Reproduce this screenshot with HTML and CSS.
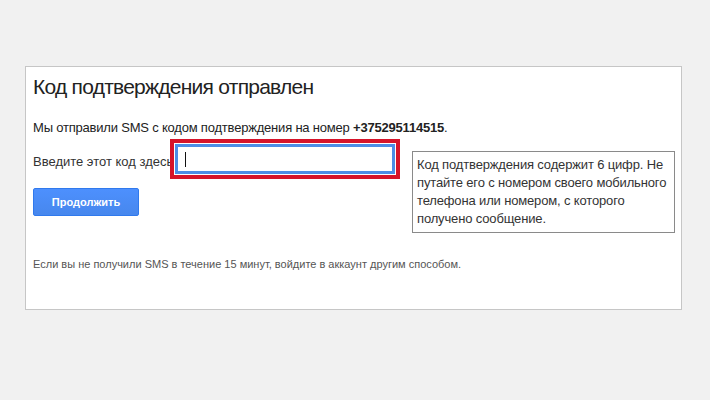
FILE: index.html
```html
<!DOCTYPE html>
<html>
<head>
  <meta content="text/html; charset=UTF-8" http-equiv="content-type" />
  <link rel="stylesheet" href="styles.css">
</head>
<body>
  <div id="card">
    <h1 class="title">Код подтверждения отправлен</h1>
    <p class="sent">Мы отправили SMS с кодом подтверждения на номер <b>+375295114515</b>.</p>
    <div class="codeRow">
      <label class="codeLabel" for="code">Введите этот код здесь</label>
      <div class="highlight">
        <div class="codeInput" id="code"><span class="caret"></span></div>
      </div>
      <div class="hint">Код подтверждения содержит 6 цифр. Не путайте его с номером своего мобильного телефона или номером, с которого получено сообщение.</div>
    </div>
    <button class="btnContinue">Продолжить</button>
    <p class="footnote">Если вы не получили SMS в течение 15 минут, войдите в аккаунт другим способом.</p>
  </div>
</body>
</html>
```

FILE: styles.css
```css
body {
  margin: 0;
  background: #f1f1f1;
  font-family: "Liberation Sans", Arial, sans-serif;
  color: #222;
}
#card {
  margin: 66px 0 0 25px;
  width: 648px;
  height: 242px;
  background: #fff;
  border: 1px solid #c6c6c6;
  padding: 0 0 0 7px;
}
.title {
  margin: 0;
  padding-top: 7px;
  font-size: 21px;
  letter-spacing: -0.75px;
  font-weight: normal;
  line-height: 26px;
  color: #222;
}
.sent {
  margin: 20px 0 0 0;
  font-size: 13px;
  letter-spacing: -0.2px;
  line-height: 16px;
}
.codeRow {
  display: flex;
  align-items: flex-start;
  margin-top: 3px;
  height: 49px;
}
.codeLabel {
  font-size: 13px;
  line-height: 16px;
  margin-top: 15px;
  width: 137px;
  flex: none;
  white-space: nowrap;
  color: #333;
}
.highlight {
  border: 4px solid #d6142a;
  padding: 1px;
  width: 230px;
  height: 40px;
  box-sizing: border-box;
  flex: none;
  background: #fff;
}
.codeInput {
  height: 100%;
  border: 3px solid #4d8ee6;
  box-sizing: border-box;
  background: #fff;
  padding: 5px 0 0 7px;
}
.caret {
  display: block;
  width: 1px;
  height: 15px;
  background: #111;
}
.hint {
  flex: none;
  margin: 12px 0 0 12px;
  width: 253px;
  border: 1px solid #8a8a8a;
  padding: 4px;
  font-size: 13px;
  letter-spacing: -0.15px;
  line-height: 18px;
  color: #333;
  background: #fff;
}
.btnContinue {
  display: block;
  width: 106px;
  height: 28px;
  border: 1px solid #3079ed;
  border-radius: 2px;
  background: linear-gradient(#4d90fe, #4787ed);
  color: #fff;
  font-family: "Liberation Sans", Arial, sans-serif;
  font-size: 11px;
  font-weight: bold;
  padding: 0;
}
.footnote {
  margin: 41px 0 0 0;
  font-size: 11px;
  line-height: 14px;
  color: #555;
}
```
